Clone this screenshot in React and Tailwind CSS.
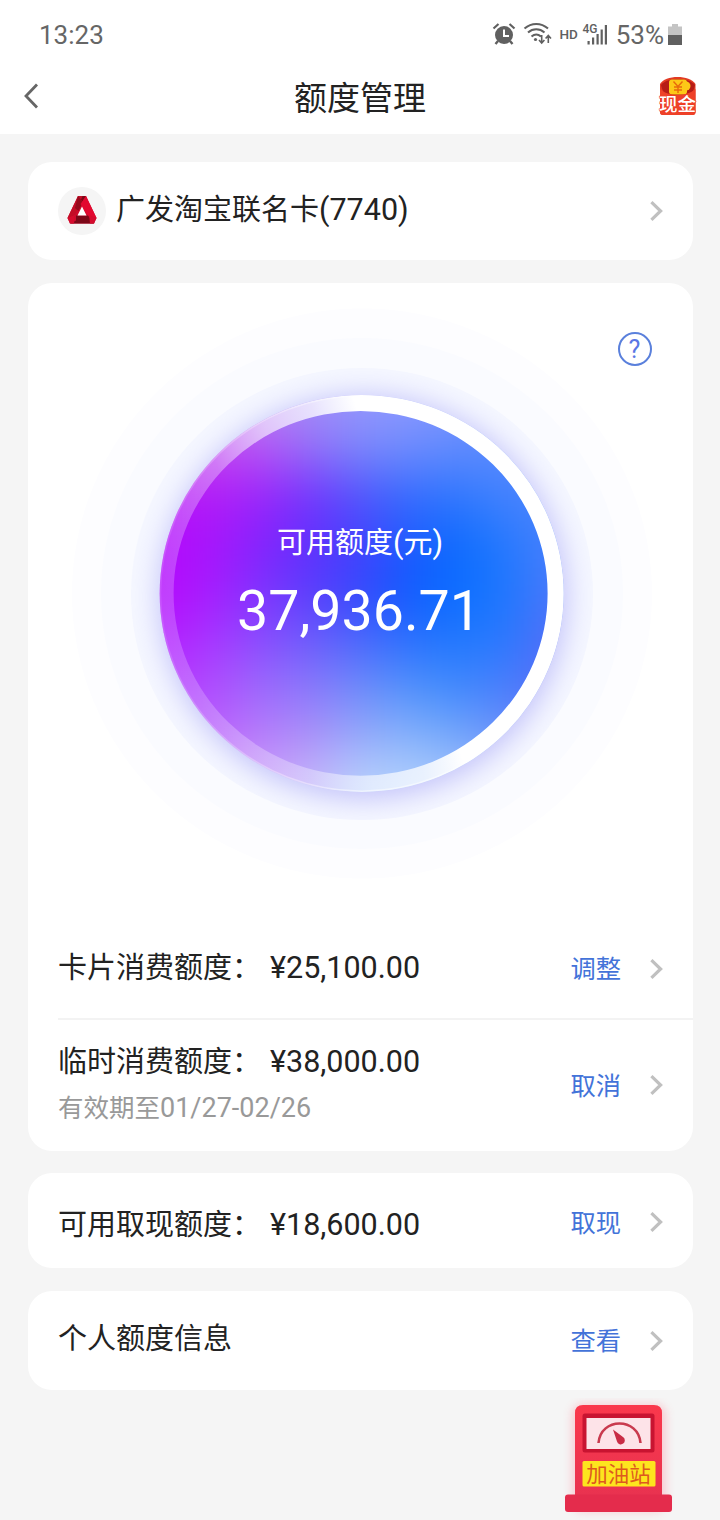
const meshRows = [
  ["#c070f0", "#c070f0", "#b884f4", "#a48cf8", "#9698fc", "#8c98ff", "#7c96ff", "#6c92ff", "#6c92ff"],
  ["#c040f0", "#c444f0", "#b854f4", "#9470f8", "#7c88fc", "#6e8cfe", "#5e8afe", "#588afe", "#5a8afe"],
  ["#b410f8", "#b41cf6", "#9c24fa", "#7434fc", "#5054fc", "#346cfe", "#3078fe", "#4482fe", "#4c84fe"],
  ["#b408fc", "#a814fc", "#8422fd", "#6030fe", "#4442fe", "#1c5cfe", "#0c6cfe", "#287afe", "#4a80fc"],
  ["#b408fc", "#a81cfe", "#7e34fe", "#5a3cfc", "#3448fc", "#0e5cfe", "#0a6eff", "#2078fe", "#5078fa"],
  ["#b41cff", "#a836ff", "#8a4cfe", "#6c5cfc", "#4a68fc", "#2a70fe", "#1e78fe", "#2c78fe", "#5a6cf6"],
  ["#b438fe", "#b04cfe", "#9c6afc", "#8a78fa", "#6e8cfa", "#5092fb", "#4088fc", "#4c7cfc", "#5c6af6"],
  ["#bc60fc", "#bc60fc", "#b87cfa", "#ac90f9", "#96aafa", "#86b2fb", "#74a6fb", "#6c90fa", "#6878f8"],
  ["#cc90f8", "#cc90f8", "#cca4f8", "#c6b6fa", "#bad4fd", "#b4d2fc", "#a8c6fb", "#90aefa", "#8c9cf8"],
];

// first and last cells run past the disc so the blur never fades at its rim
const cells = meshRows.flatMap((row, r) =>
  row.map((fill, c) => ({
    key: `${r}-${c}`,
    fill,
    x: c === 0 ? 65 : 135 + c * 50,
    y: r === 0 ? 306 : 376 + r * 48,
    width: c === 0 ? 120.5 : c === 8 ? 120 : 50.5,
    height: r === 0 ? 118.5 : r === 8 ? 118 : 48.5,
  }))
);

const limits = [
  { label: "卡片消费额度：", amount: "¥25,100.00", action: "调整" },
  { label: "临时消费额度：", amount: "¥38,000.00", action: "取消" },
];

function Chevron() {
  return (
    <svg width="14" height="20" viewBox="0 0 14 20" fill="none" stroke="#c0c0c0" strokeWidth="3.2">
      <path d="M1.400 1.200 10.600 10 1.400 18.800" />
    </svg>
  );
}

function Action({ text }) {
  return (
    <button className="flex items-center">
      <span className="w-[52.500px] pt-[3px] text-[25.3px] leading-8 text-[#4373d9]">{text}</span>
      <span className="ml-7">
        <Chevron />
      </span>
    </button>
  );
}

function Amount({ children }) {
  return <span className="ml-[9px] text-[30.5px]">{children}</span>;
}

function StatusIcons() {
  return (
    <svg width="116" height="30" viewBox="492 20 116 30" fill="none" stroke="#606060">
      {/* alarm */}
      <circle cx="504" cy="35" r="9" fill="#606060" stroke="none" />
      <path d="M493.500 28.500l5-4.500M514.500 28.500l-5-4.500" strokeWidth="2.200" />
      <path d="M498 41l-2.500 3M510 41l2.500 3" strokeWidth="2.400" />
      <path d="M504 29.500v6.500h5" stroke="#fff" strokeWidth="2" />
      {/* wifi */}
      <path d="M524.500 28.500c7-6 16.500-6 23.500 0M528 32.500c5-4.300 11.500-4.300 16.500 0M531.500 36.500c3-2.500 6.500-2.500 9.500 0" strokeWidth="2.100" />
      <circle cx="535.500" cy="39.500" r="1.600" fill="#606060" stroke="none" />
      <path d="M541.700 35v7.500M539 40l2.700 3 2.700-3M548.300 43v-7.500M545.600 38.500l2.700-3 2.700 3" strokeWidth="1.600" />
      <g fill="#606060" stroke="none">
        <text x="559.500" y="38.500" fontSize="13.500" fontWeight="500" className="font-['Roboto']">HD</text>
        <text x="582.500" y="33" fontSize="12" fontWeight="500" className="font-['Roboto']">4G</text>
        <rect x="587.500" y="41" width="2.200" height="3.500" />
        <rect x="592" y="37.500" width="2.200" height="7" />
        <rect x="596.500" y="34" width="2.200" height="10.500" />
        <rect x="600.600" y="29.500" width="2.200" height="15" />
        <rect x="604.800" y="25" width="2.200" height="19.500" />
      </g>
    </svg>
  );
}

function CashBadge() {
  return (
    <svg width="40" height="42" viewBox="0 0 40 42">
      <path d="M2 8C7-1.500 32-1.500 37.500 8v28q0 3-3 3H5q-3 0-3-3Z" fill="#e23a24" />
      <path d="M3 9C9 1 31 1 37 9c-2 10-8 14-17 14S5 19 3 9Z" fill="#b61c16" />
      <rect x="11" y="3.500" width="18" height="15" rx="3" fill="#fdc817" />
      <circle cx="28" cy="10" r="4.500" fill="#fdc817" />
      <path d="M2 13c9 8 26 8 35.500 0v23q0 3-3 3H5q-3 0-3-3Z" fill="#ee4128" />
      <path d="M15.500 5.500l4.500 5 4.500-5M20 10.500v6.500M16 11h8M16 14h8" stroke="#e8690c" strokeWidth="1.400" fill="none" />
      <text
        x="19.500"
        y="35"
        textAnchor="middle"
        fontSize="18.500"
        fontWeight="500"
        fill="#fff"
        stroke="#ee3d26"
        strokeWidth="1.200"
        paintOrder="stroke"
      >
        现金
      </text>
    </svg>
  );
}

function BankLogo() {
  return (
    <span className="flex size-12 items-center justify-center rounded-full bg-[#f5f5f5]">
      <svg width="30" height="28" viewBox="0 0 30 28" className="mb-0.5">
        <path d="M11 0h8l10.500 22-2.500 5.500H3L.5 22Z" fill="#cf0a2c" />
        <path d="M11 0h8l-3.500 5.500Z" fill="#7e0716" />
        <path d="M11 0h4.500L6 24 .5 22Z" fill="#c20d27" />
        <path d="M11 0l5 6-4.500 9L8 12Z" fill="#960a1c" />
        <path d="M19 0l10.500 22-6.500 1-9.500-15Z" fill="#e2082f" />
        <path d="M9 19.500h12l6 8H3l6-3Z" fill="#7c0818" />
        <path d="M.5 22L8 19l-1 8.500H3Z" fill="#d50b2d" />
        <path d="M29.500 22L22 19l1 8.500h4Z" fill="#d50b2d" />
        <path d="M15 10.500l4.500 9h-9Z" fill="#fff" />
      </svg>
    </span>
  );
}

function LimitGauge() {
  return (
    <div className="relative h-[634px]">
      <svg width="665" height="634" viewBox="28 283 665 634">
        <defs>
          <clipPath id="disc">
            <ellipse cx="361.700" cy="593.400" rx="202" ry="198.500" />
          </clipPath>
          <filter id="mesh" x="-10%" y="-10%" width="120%" height="120%" colorInterpolationFilters="sRGB">
            <feGaussianBlur stdDeviation="25" />
          </filter>
          <filter id="glow" x="-30%" y="-30%" width="160%" height="160%">
            <feGaussianBlur stdDeviation="14" />
          </filter>
          <linearGradient id="ring" gradientUnits="userSpaceOnUse" x1="130" y1="471" x2="355" y2="403">
            <stop offset="0" stopColor="#fff" stopOpacity=".2" />
            <stop offset=".36" stopColor="#fff" stopOpacity=".32" />
            <stop offset=".6" stopColor="#fff" stopOpacity=".6" />
            <stop offset=".82" stopColor="#fff" stopOpacity=".76" />
            <stop offset="1" stopColor="#fff" />
          </linearGradient>
          <linearGradient id="rim" x1="0" x2="1">
            <stop offset="0" stopColor="#fff" stopOpacity=".1" />
            <stop offset=".5" stopColor="#fff" stopOpacity=".5" />
          </linearGradient>
          <clipPath id="halo">
            <ellipse cx="362" cy="594" rx="231" ry="226" />
          </clipPath>
        </defs>

        <ellipse cx="362" cy="593.500" rx="290" ry="285" fill="#fdfdff" />
        <ellipse cx="362" cy="593.500" rx="261" ry="255.500" fill="#fafbff" />
        <ellipse cx="362" cy="594" rx="231" ry="226" fill="#f5f7ff" />
        <g clipPath="url(#halo)">
          <ellipse cx="363" cy="597" rx="204" ry="202" fill="#c2c2fa" filter="url(#glow)" />
        </g>

        <g clipPath="url(#disc)">
          <g filter="url(#mesh)">
            {cells.map(({ key, ...cell }) => (
              <rect key={key} {...cell} />
            ))}
          </g>
          <path
            fillRule="evenodd"
            fill="url(#ring)"
            d="M158 593.400a203.500 200 0 1 0 407 0a203.500 200 0 1 0-407 0ZM173.600 593.300a187 182.400 0 1 0 374 0a187 182.400 0 1 0-374 0Z"
          />
          <ellipse cx="361.700" cy="593.400" rx="201.500" ry="198" fill="none" stroke="url(#rim)" strokeWidth="2" />
        </g>
      </svg>

      <div className="absolute inset-x-0 top-[240px] flex flex-col items-center pr-px text-white">
        <p className="text-[29px] leading-10">
          可用额度<span className="text-[30.5px]">(</span>元<span className="text-[30.5px]">)</span>
        </p>
        <p className="mt-2.5 pr-0.5 text-[55.5px] leading-[78px]">37,936.71</p>
      </div>
      <button className="absolute right-[41.500px] top-[49px] flex size-[34px] items-center justify-center rounded-full border-2 border-[#5a80dc] pt-px text-[25px] leading-none text-[#5a76e4]">
        ?
      </button>
    </div>
  );
}

function GasStation() {
  return (
    <svg width="130" height="122" viewBox="555 1398 130 122">
      <defs>
        <filter id="soft" x="-20%" y="-20%" width="140%" height="140%">
          <feGaussianBlur stdDeviation="5" />
        </filter>
        <linearGradient id="pump" x1="0" x2="0" y1="0" y2="1">
          <stop offset="0" stopColor="#fa384c" />
          <stop offset="1" stopColor="#e83250" />
        </linearGradient>
      </defs>
      <rect x="572" y="1404" width="94" height="108" rx="10" fill="#ff4d68" opacity=".25" filter="url(#soft)" />
      <path d="M575 1500v-87q0-8 8-8h71q8 0 8 8v87Z" fill="url(#pump)" />
      <rect x="582.500" y="1413.500" width="72" height="39" rx="2.500" fill="#c81431" />
      <rect x="586.500" y="1418" width="64" height="31" fill="#fde3e8" />
      <path d="M598.500 1443c2-26 40-26 42 0" fill="none" stroke="#c93a4e" strokeWidth="2.600" />
      <path d="M613 1429.500l10 7.500a4 4 0 1 1-6 4.500Z" fill="#c92c45" />
      <rect x="582.500" y="1461" width="73" height="25.500" rx="1.500" fill="#fde51e" />
      <text x="618.500" y="1481.500" textAnchor="middle" fontSize="21.500" fill="#dd5a1e">
        加油站
      </text>
      <rect x="565" y="1494.500" width="107" height="17.500" rx="3" fill="#e42c4c" />
    </svg>
  );
}

export default function App() {
  return (
    <div className="h-[1520px] w-[720px] overflow-hidden bg-[#f5f5f5] font-['Roboto','Noto_Sans_CJK_SC',sans-serif] text-[#222]">
      <header className="h-[134px] bg-white">
        <div className="flex h-[60px] items-center justify-between pl-[39px] pr-[38px] pt-[9px] text-[26px] leading-none text-[#666]">
          <span>13:23</span>
          <div className="flex items-center">
            <StatusIcons />
            <span className="ml-2">53%</span>
            <svg className="ml-1" width="14" height="22" viewBox="0 0 14 22">
              <path d="M4 0h6v2.500h4V11H0V2.500h4Z" fill="#c4c4c4" />
              <path d="M0 11h14v10H0Z" fill="#606060" />
            </svg>
          </div>
        </div>
        <div className="flex h-[74px] items-center justify-between pl-6 pr-[22px]">
          <svg className="mb-0.5" width="40" height="26" viewBox="0 0 40 26" fill="none" stroke="#666" strokeWidth="2.800">
            <path d="M13 1.500 2 13l11 11.500" />
          </svg>
          <h1 className="pr-0.5 pt-[3px] text-[33px]">额度管理</h1>
          <CashBadge />
        </div>
      </header>

      <main className="flex flex-col gap-[22.500px] pl-7 pr-[27px] pt-7">
        <section className="flex h-[98px] items-center rounded-3xl bg-white pl-[30px] pr-[29px]">
          <BankLogo />
          <p className="ml-[10px] flex-1 pb-0.5 text-[29px]">
            广发淘宝联名卡<span className="text-[30.5px]">(7740)</span>
          </p>
          <Chevron />
        </section>

        <section className="h-[868px] rounded-3xl bg-white">
          <LimitGauge />
          <div className="flex h-[101px] items-center justify-between pl-[30px] pr-[29px] pt-[3px]">
            <p className="pb-0.5 text-[29px]">
              {limits[0].label}
              <Amount>{limits[0].amount}</Amount>
            </p>
            <Action text={limits[0].action} />
          </div>
          <div className="ml-[30px] h-0.5 bg-[#f3f3f3]" />
          <div className="flex h-[131px] items-center justify-between pl-[30px] pr-[29px]">
            <div>
              <p className="text-[29px] leading-[46px]">
                {limits[1].label}
                <Amount>{limits[1].amount}</Amount>
              </p>
              <p className="text-[25.500px] leading-[46px] text-[#999]">
                有效期至<span className="text-[27px]">01/27-02/26</span>
              </p>
            </div>
            <Action text={limits[1].action} />
          </div>
        </section>

        <section className="flex h-[95px] items-center justify-between rounded-3xl bg-white pl-[30px] pr-[29px] pt-[3px]">
          <p className="pt-[5px] text-[29px]">
            可用取现额度：
            <Amount>¥18,600.00</Amount>
          </p>
          <Action text="取现" />
        </section>

        <section className="flex h-[99px] items-center justify-between rounded-3xl bg-white pl-[30px] pr-[29px] pt-px">
          <p className="pb-0.5 text-[29px]">个人额度信息</p>
          <Action text="查看" />
        </section>
      </main>

      <div className="mt-2 flex justify-end pr-[35px]">
        <GasStation />
      </div>
    </div>
  );
}
